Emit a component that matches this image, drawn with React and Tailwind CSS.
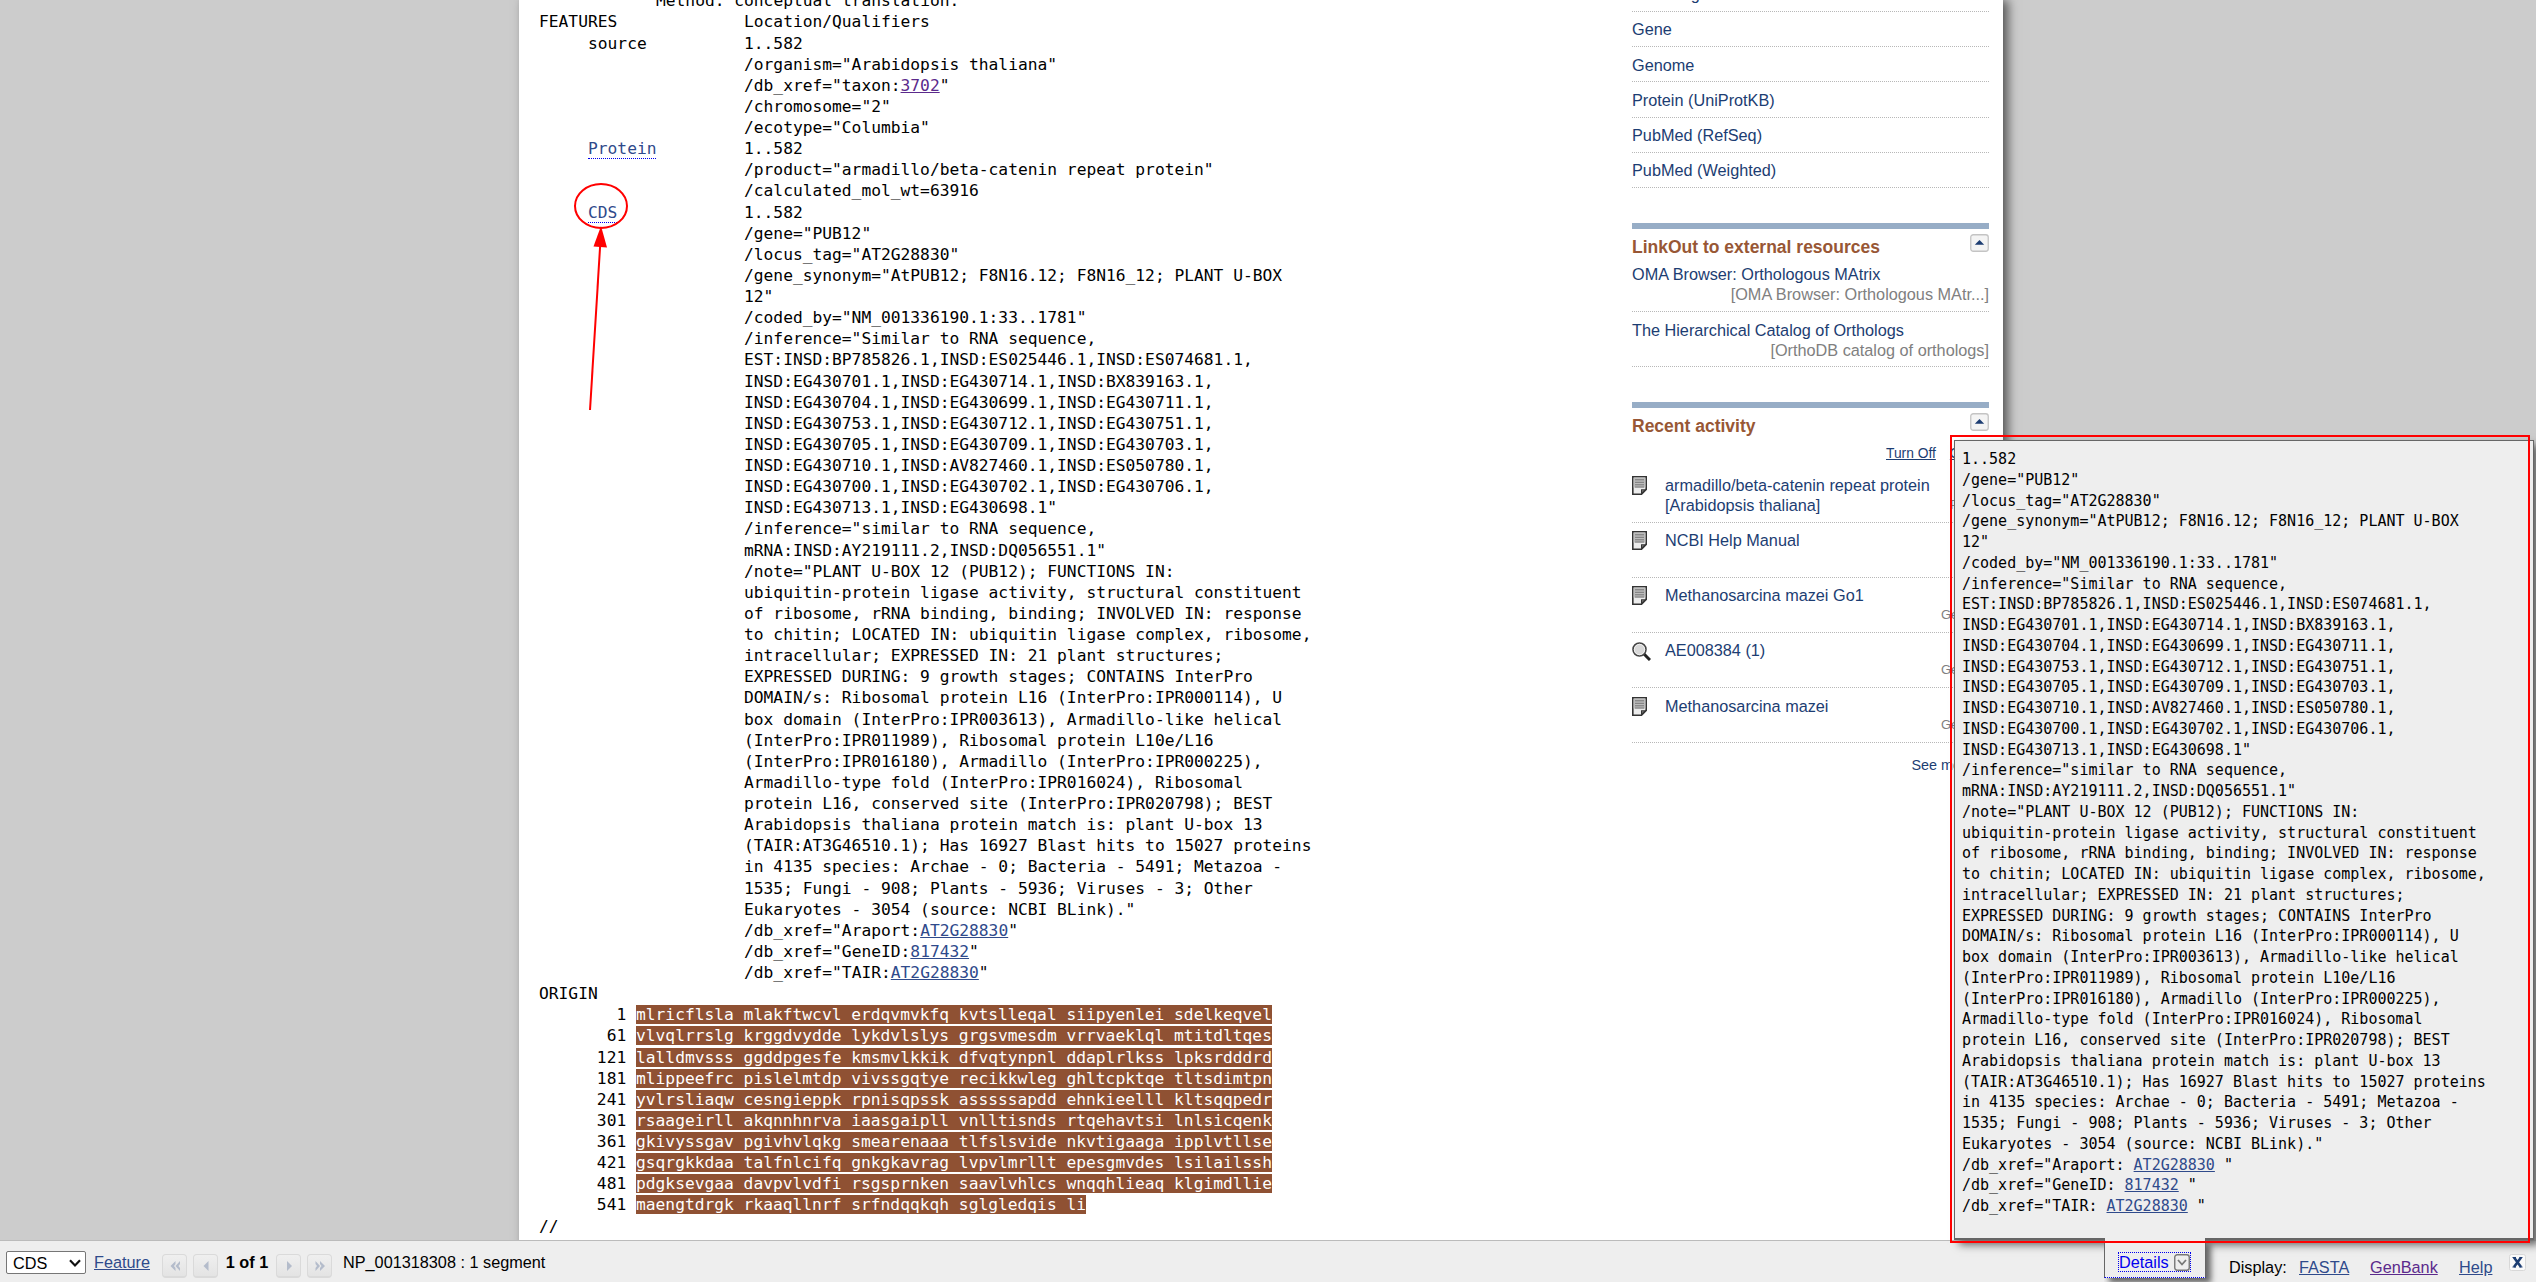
const A = 'text-[#2f4a8b] underline';

const qualifiers = [
  '1..582',
  '/gene="PUB12"',
  '/locus_tag="AT2G28830"',
  '/gene_synonym="AtPUB12; F8N16.12; F8N16_12; PLANT U-BOX',
  '12"',
  '/coded_by="NM_001336190.1:33..1781"',
  '/inference="Similar to RNA sequence,',
  'EST:INSD:BP785826.1,INSD:ES025446.1,INSD:ES074681.1,',
  'INSD:EG430701.1,INSD:EG430714.1,INSD:BX839163.1,',
  'INSD:EG430704.1,INSD:EG430699.1,INSD:EG430711.1,',
  'INSD:EG430753.1,INSD:EG430712.1,INSD:EG430751.1,',
  'INSD:EG430705.1,INSD:EG430709.1,INSD:EG430703.1,',
  'INSD:EG430710.1,INSD:AV827460.1,INSD:ES050780.1,',
  'INSD:EG430700.1,INSD:EG430702.1,INSD:EG430706.1,',
  'INSD:EG430713.1,INSD:EG430698.1"',
  '/inference="similar to RNA sequence,',
  'mRNA:INSD:AY219111.2,INSD:DQ056551.1"',
  '/note="PLANT U-BOX 12 (PUB12); FUNCTIONS IN:',
  'ubiquitin-protein ligase activity, structural constituent',
  'of ribosome, rRNA binding, binding; INVOLVED IN: response',
  'to chitin; LOCATED IN: ubiquitin ligase complex, ribosome,',
  'intracellular; EXPRESSED IN: 21 plant structures;',
  'EXPRESSED DURING: 9 growth stages; CONTAINS InterPro',
  'DOMAIN/s: Ribosomal protein L16 (InterPro:IPR000114), U',
  'box domain (InterPro:IPR003613), Armadillo-like helical',
  '(InterPro:IPR011989), Ribosomal protein L10e/L16',
  '(InterPro:IPR016180), Armadillo (InterPro:IPR000225),',
  'Armadillo-type fold (InterPro:IPR016024), Ribosomal',
  'protein L16, conserved site (InterPro:IPR020798); BEST',
  'Arabidopsis thaliana protein match is: plant U-box 13',
  '(TAIR:AT3G46510.1); Has 16927 Blast hits to 15027 proteins',
  'in 4135 species: Archae - 0; Bacteria - 5491; Metazoa -',
  '1535; Fungi - 908; Plants - 5936; Viruses - 3; Other',
  'Eukaryotes - 3054 (source: NCBI BLink)."',
];

const xrefs = [
  ['Araport', 'AT2G28830'],
  ['GeneID', '817432'],
  ['TAIR', 'AT2G28830'],
];

const origin = [
  [1, 'mlricflsla mlakftwcvl erdqvmvkfq kvtslleqal siipyenlei sdelkeqvel'],
  [61, 'vlvqlrrslg krggdvydde lykdvlslys grgsvmesdm vrrvaeklql mtitdltqes'],
  [121, 'lalldmvsss ggddpgesfe kmsmvlkkik dfvqtynpnl ddaplrlkss lpksrdddrd'],
  [181, 'mlippeefrc pislelmtdp vivssgqtye recikkwleg ghltcpktqe tltsdimtpn'],
  [241, 'yvlrsliaqw cesngieppk rpnisqpssk asssssapdd ehnkieelll kltsqqpedr'],
  [301, 'rsaageirll akqnnhnrva iaasgaipll vnlltisnds rtqehavtsi lnlsicqenk'],
  [361, 'gkivyssgav pgivhvlqkg smearenaaa tlfslsvide nkvtigaaga ipplvtllse'],
  [421, 'gsqrgkkdaa talfnlcifq gnkgkavrag lvpvlmrllt epesgmvdes lsilailssh'],
  [481, 'pdgksevgaa davpvlvdfi rsgsprnken saavlvhlcs wnqqhlieaq klgimdllie'],
  [541, 'maengtdrgk rkaaqllnrf srfndqqkqh sglgledqis li'],
];

function Feature({ name, link, children }) {
  return (
    <div className="flex">
      <div className="w-[156px] shrink-0">
        {link ? (
          <span className="block h-[21px] w-fit border-b border-dotted border-[#0000ee] text-[#2f4a8b]">{name}</span>
        ) : (
          name
        )}
      </div>
      <div className="whitespace-pre">{children}</div>
    </div>
  );
}

function Record() {
  return (
    <div className="w-[820px] pl-5 font-['DejaVu_Sans_Mono',monospace] text-[16.25px] leading-[21.125px] whitespace-pre text-black">
      <div className="-mt-[9.75px] pl-[117px]">Method: conceptual translation.</div>
      <div className="flex">
        <div className="w-[205px]">FEATURES</div>
        <div>Location/Qualifiers</div>
      </div>
      <div className="pl-[49px]">
        <Feature name="source">
          <div>1..582</div>
          <div>/organism="Arabidopsis thaliana"</div>
          <div>/db_xref="taxon:<a className="text-[#5b2a8c] underline">3702</a>"</div>
          <div>/chromosome="2"</div>
          <div>/ecotype="Columbia"</div>
        </Feature>
        <Feature name="Protein" link>
          <div>1..582</div>
          <div>/product="armadillo/beta-catenin repeat protein"</div>
          <div>/calculated_mol_wt=63916</div>
        </Feature>
        <Feature name="CDS" link>
          {qualifiers.map((q) => <div key={q}>{q}</div>)}
          {xrefs.map(([db, id]) => (
            <div key={db}>/db_xref="{db}:<a className={A}>{id}</a>"</div>
          ))}
        </Feature>
      </div>
      <div>ORIGIN</div>
      {origin.map(([n, seq]) => (
        <div key={n} className="flex">
          <div className="w-[97px] pr-[9.8px] text-right">{n}</div>
          <div><span className="bg-[#8f5133] text-white">{seq}</span></div>
        </div>
      ))}
      <div>//</div>
    </div>
  );
}

function Collapse() {
  return (
    <svg className="mt-[5px] h-[18px] w-[19px]" viewBox="0 0 19 18">
      <rect x="0.75" y="0.75" width="17.5" height="16.5" rx="2.5" fill="#f4f4f4" stroke="#c4c4c4" strokeWidth="1.3" />
      <path d="M4.8 10.8 L9.5 6 L14.2 10.8 Z" fill="#1c3d72" />
    </svg>
  );
}

function SectionHead({ children }) {
  return (
    <div className="flex h-[36px] justify-between border-t-[6px] border-[#97adc6]">
      <h3 className="pt-[7px] text-[17.5px] leading-[22px] font-bold text-[#985735]">{children}</h3>
      <Collapse />
    </div>
  );
}

function DocIcon() {
  return (
    <svg className="h-[19px] w-[15px]" viewBox="0 0 15 19">
      <path d="M0.8 0.8 H14.2 V13.5 L9.5 18.2 H0.8 Z" fill="#ececec" stroke="#333" strokeWidth="1.6" />
      <rect x="1.6" y="1.6" width="11.8" height="10" fill="#bdbdbd" />
      <path d="M3 3.8 H12 M3 6.3 H12 M3 8.8 H12 M3 11 H12" stroke="#777" strokeWidth="1" />
      <path d="M9 18.4 V13.2 H14.4 Z" fill="#333" />
      <path d="M10.4 15.8 V14.5 H11.7 Z" fill="#ddd" />
    </svg>
  );
}

function SearchIcon() {
  return (
    <svg className="h-[19px] w-[19px]" viewBox="0 0 19 19">
      <path d="M12 12 L18 18" stroke="#222" strokeWidth="3" />
      <circle cx="7.5" cy="7.5" r="6.5" fill="#d8d8d8" stroke="#444" strokeWidth="1.6" />
      <circle cx="7.5" cy="7.5" r="5.2" fill="none" stroke="#f3f3f3" strokeWidth="0.9" />
    </svg>
  );
}

const activity = [
  { lines: ['armadillo/beta-catenin repeat protein', '[Arabidopsis thaliana]'], src: 'Protein', srcAt: 'left-[318px]', pad: 'pt-[7px]', iconPad: 'pt-[1px]' },
  { lines: ['NCBI Help Manual'], pad: 'pt-[7px]', iconPad: 'pt-[1px]' },
  { lines: ['Methanosarcina mazei Go1'], src: 'Genome', srcAt: 'left-[309px]', pad: 'pt-[7px]', iconPad: 'pt-[1px]' },
  { search: true, lines: ['AE008384 (1)'], src: 'Genome', srcAt: 'left-[309px]', pad: 'pt-[7px]', iconPad: 'pt-[2px]' },
  { lines: ['Methanosarcina mazei'], src: 'Genome', srcAt: 'left-[309px]', pad: 'pt-[8px]', iconPad: 'pt-[1px]' },
];

function Sidebar() {
  return (
    <div className="w-[357px] text-[16.25px] leading-[20px] text-[#1c3d72]">
      <div className="-mt-[23.2px] h-[35.2px] border-b border-dotted border-[#b8b8b8] pt-[7.4px]">Encoding mRNA</div>
      {['Gene', 'Genome', 'Protein (UniProtKB)', 'PubMed (RefSeq)', 'PubMed (Weighted)'].map((t) => (
        <div key={t} className="h-[35.2px] border-b border-dotted border-[#b8b8b8] pt-[7.4px]">{t}</div>
      ))}
      <div className="h-[35px]" />
      <SectionHead>LinkOut to external resources</SectionHead>
      <div className="h-[53px] border-b border-dotted border-[#b8b8b8] pt-[5px]">
        <div>OMA Browser: Orthologous MAtrix</div>
        <div className="text-right text-[#808080]">[OMA Browser: Orthologous MAtr...]</div>
      </div>
      <div className="h-[55px] border-b border-dotted border-[#b8b8b8] pt-[8px]">
        <div>The Hierarchical Catalog of Orthologs</div>
        <div className="text-right text-[#808080]">[OrthoDB catalog of orthologs]</div>
      </div>
      <div className="h-[35px]" />
      <SectionHead>Recent activity</SectionHead>
      <div className="flex h-[30px] gap-[14px] pt-[6px] pl-[254px] text-[13.8px] whitespace-nowrap underline">
        <span>Turn Off</span><span>Clear</span>
      </div>
      {activity.map(({ search, lines, src, srcAt, pad, iconPad }) => (
        <div key={lines[0]} className={`relative flex h-[55px] border-b border-dotted border-[#b8b8b8] ${pad}`}>
          <div className={`w-[33px] shrink-0 ${iconPad}`}>{search ? <SearchIcon /> : <DocIcon />}</div>
          <div>{lines.map((l) => <div key={l}>{l}</div>)}</div>
          {src && <span className={`absolute top-[27px] text-[13px] text-[#808080] ${srcAt}`}>{src}</span>}
        </div>
      ))}
      <div className="pt-[12px] pl-[279.500px] text-[14.4px] whitespace-nowrap">See more...</div>
    </div>
  );
}

function Details() {
  return (
    <div className="absolute top-[440px] left-[1954px] h-[800px] w-[580px] border border-b-2 border-[#666] bg-[#eee] pt-[8px] pl-[7px] font-['DejaVu_Sans_Mono',monospace] text-[15px] leading-[20.75px] whitespace-pre text-black shadow-[5px_5px_8px_#666]">
      {qualifiers.map((q) => <div key={q}>{q}</div>)}
      {xrefs.map(([db, id]) => (
        <div key={db}>/db_xref="{db}: <a className={A}>{id}</a> "</div>
      ))}
    </div>
  );
}

function Pager({ d }) {
  return (
    <span className="flex h-6 w-[25px] items-center justify-center rounded border border-b-2 border-[#dadada] bg-linear-to-b from-[#efefef] to-[#e4e4e4]">
      <svg className="h-3 w-3" viewBox="0 0 12 12"><path d={d} fill="#b4bccb" /></svg>
    </span>
  );
}

function BottomBar() {
  return (
    <div className="absolute top-[1240px] left-0 flex h-[42px] w-full border-t border-[#bbb] bg-[#eee] text-[16.25px] leading-5 whitespace-nowrap text-black">
      <div className="mt-[10px] ml-[6px] flex h-[23px] w-20 items-center justify-between rounded-[2px] border border-[#767676] bg-white pr-[4px] pl-[6px]">
        CDS
        <svg className="h-2 w-3" viewBox="0 0 12 8"><path d="M1 1.2 L6 6.4 L11 1.2" fill="none" stroke="#111" strokeWidth="2.2" /></svg>
      </div>
      <a className={`${A} mt-[11px] ml-2 w-[68px]`}>Feature</a>
      <div className="mt-[13px] flex gap-[6px]">
        <Pager d="M6.500 1 V4 L5 6 L6.500 8 V11 L1.500 6 Z M11 1 V4 L9.500 6 L11 8 V11 L6.500 6 Z" />
        <Pager d="M8.500 1 V11 L3.500 6 Z" />
      </div>
      <b className="mt-[11px] w-[58px] text-center">1 of 1</b>
      <div className="mt-[13px] flex gap-[6px]">
        <Pager d="M4 1 V11 L9 6 Z" />
        <Pager d="M1.500 1 V4 L3 6 L1.500 8 V11 L6 6 Z M6 1 V4 L7.500 6 L6 8 V11 L11 6 Z" />
      </div>
      <span className="mt-[11px] ml-[11px]">NP_001318308 : 1 segment</span>
      <div className="mt-4 mr-[10px] ml-auto flex">
        <span className="w-[70px]">Display:</span>
        <a className={`${A} w-[71px]`}>FASTA</a>
        <a className="w-[89px] text-[#5b2a8c] underline">GenBank</a>
        <a className={`${A} w-[50px]`}>Help</a>
        <svg className="-mt-[3px] h-[17px] w-[17px]" viewBox="0 0 17 17">
          <rect x="0.5" y="0.5" width="16" height="16" rx="2" fill="#fafafa" stroke="#d8d8d8" />
          <path d="M5 3.500 L12 13 M12 3.500 L5 13" stroke="#1c3d72" strokeWidth="2.6" />
          <path d="M3.500 3.500 H7 M10.500 3.500 H13.500 M3.500 13 H7 M10.500 13 H13.500" stroke="#1c3d72" strokeWidth="1" />
        </svg>
      </div>
    </div>
  );
}

export default function App() {
  return (
    <div className="relative h-[1282px] w-[2536px] overflow-hidden bg-[#ccc] font-['Liberation_Sans',Arial,sans-serif]">
      <div className="ml-[519px] flex h-[1282px] w-[1484px] bg-white shadow-[5px_0_10px_#555]">
        <Record />
        <div className="ml-[293px]"><Sidebar /></div>
      </div>
      <BottomBar />
      <Details />
      <div className="absolute top-[1238px] left-[2104px] flex h-[40px] w-[102px] border-x border-b border-x-[#666] border-b-[#0000ee] bg-[#eee] pt-[14px] pl-[13px] text-[16.25px] text-[#0000ee] shadow-[5px_5px_6px_#666] [border-bottom-style:dotted] [clip-path:inset(0_-20px_-20px_0)]">
        <span className="flex h-5 w-[73px] items-center justify-between border border-dotted border-[#0000ee] leading-5">
          Details
          <svg className="h-[17px] w-4" viewBox="0 0 16 17">
            <rect x="0.75" y="0.75" width="14.5" height="15.5" rx="2.5" fill="#eee" stroke="#777" strokeWidth="1.4" />
            <path d="M4 6 L8 10.500 L12 6" fill="none" stroke="#777" strokeWidth="1.8" />
          </svg>
        </span>
      </div>
      <div className="absolute top-[435px] left-[1950px] h-[808px] w-[580px] border-2 border-[#f00]" />
      <svg className="absolute top-[180px] left-[570px] h-[235px] w-[62px]" viewBox="0 0 62 235">
        <ellipse cx="31" cy="26" rx="26" ry="22" fill="none" stroke="#f00" strokeWidth="2" />
        <path d="M30.500 60 L20 230" stroke="#f00" strokeWidth="2" />
        <path d="M31 46 L37 67.500 L23.500 66.500 Z" fill="#f00" />
      </svg>
    </div>
  );
}
